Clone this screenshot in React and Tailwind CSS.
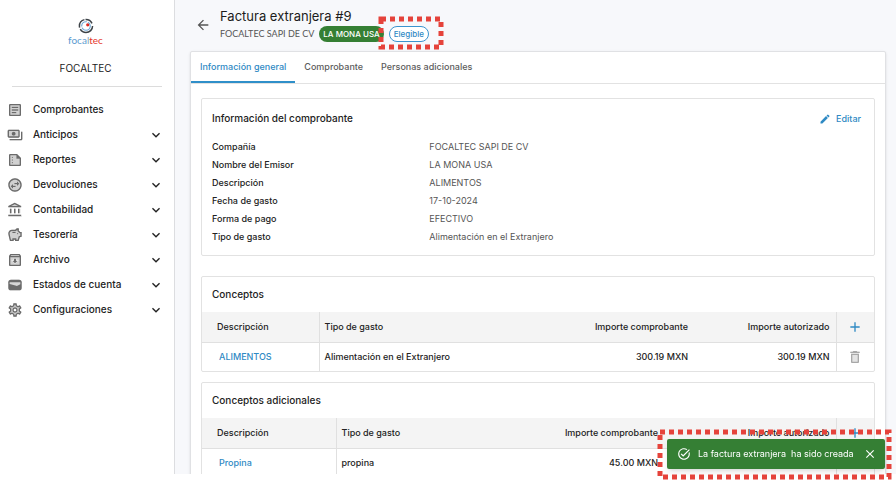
import React, { useState } from "react";
import {
  MdAccountBalance,
  MdAdd,
  MdArchive,
  MdArrowBack,
  MdArticle,
  MdClose,
  MdDelete,
  MdEdit,
  MdExpandMore,
  MdOutlineAccountBalance,
  MdOutlineArchive,
  MdOutlineArticle,
  MdOutlineDelete,
  MdOutlinePayments,
  MdOutlineSavings,
  MdOutlineSettings,
  MdOutlineSummarize,
  MdOutlineSwapHorizontalCircle,
  MdOutlineTaskAlt,
  MdPayments,
  MdSavings,
  MdSettings,
  MdSummarize,
  MdSwapHorizontalCircle,
} from "react-icons/md";

const menu = [
  { label: "Comprobantes", base: MdArticle, line: MdOutlineArticle, leaf: true },
  { label: "Anticipos", base: MdPayments, line: MdOutlinePayments },
  { label: "Reportes", base: MdSummarize, line: MdOutlineSummarize },
  { label: "Devoluciones", base: MdSwapHorizontalCircle, line: MdOutlineSwapHorizontalCircle },
  { label: "Contabilidad", base: MdAccountBalance, line: MdOutlineAccountBalance },
  { label: "Tesorería", base: MdSavings, line: MdOutlineSavings },
  { label: "Archivo", base: MdArchive, line: MdOutlineArchive },
  { label: "Estados de cuenta", base: WalletIcon, line: WalletIcon },
  { label: "Configuraciones", base: MdSettings, line: MdOutlineSettings },
];

const details = [
  ["Compañía", "FOCALTEC SAPI DE CV"],
  ["Nombre del Emisor", "LA MONA USA"],
  ["Descripción", "ALIMENTOS"],
  ["Fecha de gasto", "17-10-2024"],
  ["Forma de pago", "EFECTIVO"],
  ["Tipo de gasto", "Alimentación en el Extranjero"],
];

const tabs = ["Información general", "Comprobante", "Personas adicionales"];

function WalletIcon({ className }) {
  return (
    <svg viewBox="0 0 24 24" className={className} fill="currentColor">
      <path d="M6 4h12a4 4 0 0 1 4 4v8a4 4 0 0 1-4 4H6a4 4 0 0 1-4-4V8a4 4 0 0 1 4-4z" />
      <path d="M4 8h16v3l-4.500 2.200a2 2 0 0 1-1.600.1L4 10.500z" fill="#d6d6d6" />
    </svg>
  );
}

// Faded solid icon with its outline stacked on top
function TwoTone({ base: Base, line: Line, className }) {
  return (
    <span className={`grid shrink-0 ${className}`}>
      <Base className="col-start-1 row-start-1 size-4 opacity-30" />
      <Line className="col-start-1 row-start-1 size-4" />
    </span>
  );
}

function DashedFrame({ className }) {
  return (
    <svg className={`pointer-events-none absolute overflow-visible ${className}`} aria-hidden="true">
      <rect width="100%" height="100%" fill="none" stroke="#e5433b" strokeWidth="5" strokeDasharray="5 4" />
    </svg>
  );
}

function Logo() {
  return (
    <div className="flex flex-col items-center">
      <svg viewBox="0 0 28 28" className="size-4" fill="none">
        <circle cx="14" cy="14" r="11.500" stroke="#3c4247" strokeWidth="2.600" strokeDasharray="30 3 18 2 14 5" />
        <circle cx="14" cy="14" r="7.500" stroke="#6fa8d6" strokeWidth="2" strokeDasharray="20 2 14 2" />
        <circle cx="17" cy="12" r="2.800" fill="#e02b20" />
      </svg>
      <p className="font-['Lato',sans-serif] text-[10px] leading-3 text-[#5b9bd0]">
        foca<span className="text-[#8aa4bd]">l</span>
        <span className="text-[#e5352b]">tec</span>
      </p>
    </div>
  );
}

function Sidebar() {
  return (
    <aside className="w-[175px] shrink-0 border-r border-[#dcdde0] bg-white pt-[18px]">
      <div className="mx-3 border-b border-[#dcdcdc] pr-[3px] pb-3">
        <Logo />
        <p className="mt-4 text-center text-[10px] leading-3">FOCALTEC</p>
      </div>
      <nav className="mt-[10px]">
        {menu.map((item) => (
          <a key={item.label} href="#" className="flex h-[25px] items-center pr-[10px] pl-[7px]">
            <TwoTone base={item.base} line={item.line} className="text-[#6b6b6b]" />
            <span className="ml-[10px] flex-1 text-[10px] font-medium">{item.label}</span>
            {!item.leaf && <MdExpandMore className="size-4" />}
          </a>
        ))}
      </nav>
    </aside>
  );
}

function Header() {
  return (
    <header className="flex items-center pt-[7px] pl-[5px]">
      <button aria-label="Regresar" className="text-[#555]">
        <MdArrowBack className="size-4" />
      </button>
      <div className="ml-[9px]">
        <h1 className="text-[13px] leading-[19px] text-[#1c1c1c]">Factura extranjera #9</h1>
        <div className="flex items-center">
          <p className="font-['Lato',sans-serif] text-[9px] text-[#555]">FOCALTEC SAPI DE CV</p>
          <span className="ml-[5px] rounded-full bg-[#357f34] px-1 text-[8px] leading-4 font-medium text-white">
            LA MONA USA
          </span>
          <span className="relative ml-[5px] flex">
            <span className="rounded-full border border-[#3a94cf] bg-white px-1 text-[8px] leading-[14px] font-medium text-[#2f8ac4]">
              Elegible
            </span>
            <DashedFrame className="-top-[7px] -left-2 h-[28px] w-[60px]" />
          </span>
        </div>
      </div>
    </header>
  );
}

function Card({ title, action, className, children }) {
  return (
    <section className={`overflow-hidden rounded-xs border border-[#e2e2e2] ${className}`}>
      <div className={`flex items-center justify-between px-[10px] ${action ? "h-[39px]" : "h-[35px]"}`}>
        <h2 className="text-[10px] font-medium">{title}</h2>
        {action}
      </div>
      {children}
    </section>
  );
}

function ConceptTable({ cols, row, removable }) {
  return (
    <table className="w-full table-fixed text-[9px] font-medium">
      <thead className="bg-[#f4f4f4]">
        <tr className="h-[30px] border-b border-[#e0e0e0] text-left">
          <th className={`border-r border-[#e0e0e0] pl-[15px] font-medium ${cols[0]}`}>Descripción</th>
          <th className="pl-[5px] font-medium">Tipo de gasto</th>
          <th className="w-[142px] pr-[6px] text-right font-medium">Importe comprobante</th>
          <th className={`border-r border-[#e0e0e0] pr-[6px] text-right font-medium ${cols[1]}`}>
            Importe autorizado
          </th>
          <th className="w-[38px]">
            <button aria-label="Agregar concepto" className="flex w-full justify-center text-[#2f8ac4]">
              <MdAdd className="size-4" />
            </button>
          </th>
        </tr>
      </thead>
      <tbody>
        <tr className="h-[29px]">
          <td className="border-r border-[#e0e0e0] pl-[17px]">
            <a href="#" className="text-[#2f8ac4]">{row.name}</a>
          </td>
          <td className="pl-[5px]">{row.type}</td>
          <td className="pr-[6px] text-right">{row.amount}</td>
          <td className="border-r border-[#e0e0e0] pr-[6px] text-right">{row.authorized}</td>
          <td>
            {removable && (
              <button aria-label="Eliminar concepto" className="flex w-full justify-center text-[#a8a8a8]">
                <TwoTone base={MdDelete} line={MdOutlineDelete} />
              </button>
            )}
          </td>
        </tr>
      </tbody>
    </table>
  );
}

function Toast({ onClose }) {
  return (
    <div className="fixed right-[11px] bottom-[11px]">
      <div role="status" className="flex h-[30px] w-[218px] items-center rounded-xs bg-[#357f34] pr-2 pl-[10px] text-white shadow-md">
        <MdOutlineTaskAlt className="size-[14px]" />
        <p className="ml-[7px] flex-1 text-[9px] whitespace-pre">La factura extranjera  ha sido creada</p>
        <button aria-label="Cerrar" onClick={onClose}>
          <MdClose className="size-[14px]" />
        </button>
      </div>
      <DashedFrame className="-top-[7px] -left-[7px] h-[45px] w-[229px]" />
    </div>
  );
}

export default function App() {
  const [tab, setTab] = useState(tabs[0]);
  const [showToast, setShowToast] = useState(true);

  return (
    <div className="h-screen bg-white pb-[6px] font-['Inter',sans-serif] text-[#222]">
      <div className="flex h-full overflow-hidden">
        <Sidebar />
        <main className="min-w-0 flex-1 bg-[#f7f8fb] pr-[10px] pl-[15px]">
          <Header />
          <div className="mt-[9px] min-h-full rounded-xs border border-[#e0e1e4] bg-white shadow-sm">
            <div role="tablist" className="flex border-b border-[#e2e2e2]">
              {tabs.map((name) => (
                <button
                  key={name}
                  role="tab"
                  aria-selected={tab === name}
                  onClick={() => setTab(name)}
                  className={
                    tab === name
                      ? "h-[31px] border-b-2 border-[#2f8fc9] px-[9px] pt-px text-[9px] font-medium text-[#2f8ac4]"
                      : "h-[31px] border-b-2 border-transparent px-[9px] pt-px text-[9px] font-medium text-[#5c5c5c]"
                  }
                >
                  {name}
                </button>
              ))}
            </div>

            <div className="px-[10px] pt-[14px]">
              <Card
                title="Información del comprobante"
                className="pb-[9px]"
                action={
                  <button className="flex items-center gap-[5px] pr-[3px] text-[9px] font-medium text-[#2f8ac4]">
                    <MdEdit className="size-3" />
                    Editar
                  </button>
                }
              >
                <dl className="px-[10px] text-[9px]">
                  {details.map(([label, value]) => (
                    <div key={label} className="grid h-[18px] grid-cols-3 items-center">
                      <dt className="font-medium">{label}</dt>
                      <dd className="col-span-2 text-[#555]">{value}</dd>
                    </div>
                  ))}
                </dl>
              </Card>

              <Card title="Conceptos" className="mt-5">
                <ConceptTable
                  cols={["w-[117px]", "w-[142px]"]}
                  row={{
                    name: "ALIMENTOS",
                    type: "Alimentación en el Extranjero",
                    amount: "300.19 MXN",
                    authorized: "300.19 MXN",
                  }}
                  removable
                />
              </Card>

              <Card title="Conceptos adicionales" className="mt-[10px]">
                <ConceptTable
                  cols={["w-[134px]", "w-[172px]"]}
                  row={{ name: "Propina", type: "propina", amount: "45.00 MXN" }}
                />
              </Card>
            </div>
          </div>
        </main>
      </div>
      {showToast && <Toast onClose={() => setShowToast(false)} />}
    </div>
  );
}
